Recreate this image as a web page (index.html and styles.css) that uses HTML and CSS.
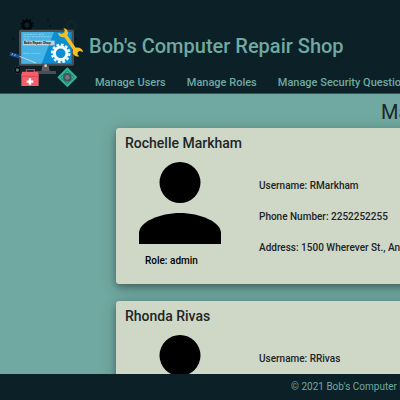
FILE: index.html
```
<!DOCTYPE html>
<html lang="en">
<head>
<meta charset="utf-8">
<meta name="viewport" content="width=device-width, initial-scale=1">
<title>Bob's Computer Repair Shop</title>
<link rel="stylesheet" href="styles.css">
</head>
<body>
<header class="header">
  <svg class="logo" viewBox="24 21 228 216" aria-hidden="true">
    <circle cx="81" cy="45" r="12" fill="none" stroke="#020708" stroke-width="8"/>
    <circle cx="81" cy="45" r="17" fill="none" stroke="#020708" stroke-width="5" stroke-dasharray="5 5.7"/>
    <circle cx="214" cy="47" r="12" fill="none" stroke="#13262b" stroke-width="6"/>
    <circle cx="214" cy="47" r="17" fill="none" stroke="#13262b" stroke-width="4" stroke-dasharray="5 5.7"/>
    <g fill="#051216">
      <circle cx="144" cy="28" r="3"/><circle cx="150" cy="48" r="3"/><circle cx="40" cy="86" r="3"/><circle cx="228" cy="87" r="3"/>
    </g>
    <rect x="57" y="59" width="165" height="108" rx="5" fill="#4b4d50"/>
    <rect x="64" y="66" width="151" height="95" fill="#0b8fd2"/>
    <path d="M64 66h98l-37 95H64z" fill="#46b4e4"/>
    <path d="M127 167h19l3 17h-25z" fill="#5c5e61"/>
    <rect x="106" y="183" width="62" height="9" rx="1" fill="#4b4d50"/>
    <circle cx="137" cy="167" r="4" fill="#d4d8da"/>
    <path d="M71 73h40m5 0h16M70 80h22m4 0h56M71 87h16M70 130h20m4 0h28" stroke="#a5dbf2" stroke-width="2" stroke-dasharray="7 2"/>
    <rect x="69" y="92" width="95" height="14" fill="#c4d0d7"/>
    <text x="71" y="103" class="logo-text">Bob's Repair Shop</text>
    <circle cx="182" cy="130" r="19" fill="none" stroke="#f6fafb" stroke-width="9"/>
    <circle cx="182" cy="130" r="26" fill="none" stroke="#f6fafb" stroke-width="7" stroke-dasharray="8 5.6"/>
    <path d="M190 54c8 1 14 6 14 14 0 3 0 5-2 8l25 37c11-2 21 3 22 13l-10-3-6 4v7l5 5c-10 3-19-3-20-12l1-8-26-37c-10 1-18-5-19-14l11 4 8-4 1-8z" fill="#f5c022"/>
    <path d="M56 138l52 21" stroke="#cfd3d4" stroke-width="3"/>
    <path d="M30 131l28 9" stroke="#164f96" stroke-width="11"/>
    <path d="M38 130l-2 6m10-4l-2 6" stroke="#dbe7f0" stroke-width="2"/>
    <circle cx="52" cy="180" r="5" fill="#626b6f"/>
    <circle cx="52" cy="180" r="8" fill="none" stroke="#02090b" stroke-width="4"/>
    <circle cx="52" cy="180" r="11" fill="none" stroke="#39454a" stroke-width="3" stroke-dasharray="4 4.6"/>
    <path d="M79 189v-10h24v10" fill="none" stroke="#b5414e" stroke-width="4"/>
    <path d="M66 185h48l3 13h-1v30H64v-30h-1z" fill="#f25e6a"/>
    <path d="M64 199h52" stroke="#c14552" stroke-width="2"/>
    <path d="M90 205v19m-10-9h20" stroke="#fff" stroke-width="7"/>
    <path d="M202 172l30 30-30 30-30-30z" fill="#35b394"/>
    <path d="M202 182l20 20-20 20-20-20z" fill="none" stroke="#197b68" stroke-width="3"/>
    <circle cx="202" cy="202" r="13" fill="#46515b"/>
    <circle cx="202" cy="202" r="7" fill="#717982"/>
  </svg>
  <div class="masthead">
    <div class="brand">Bob's Computer Repair Shop</div>
    <nav class="nav">
      <a href="#users">Manage Users</a>
      <a href="#roles">Manage Roles</a>
      <a href="#questions">Manage Security Questions</a>
    </nav>
  </div>
</header>
<main class="main">
  <h1 class="page-title">Manage Users</h1>
  <section class="card">
    <h2 class="name">Rochelle Markham</h2>
    <div class="card-body">
      <div class="profile">
        <svg class="avatar" viewBox="0 0 82 82" aria-hidden="true"><circle cx="41" cy="20.5" r="20.5"/><path d="M0 82V71C0 60 21 51 41 51s41 9 41 20v11z"/></svg>
        <p class="role">Role: admin</p>
      </div>
      <div class="details">
        <p>Username: RMarkham</p>
        <p>Phone Number: 2252252255</p>
        <p>Address: 1500 Wherever St., Anywhere</p>
      </div>
    </div>
  </section>
  <section class="card">
    <h2 class="name">Rhonda Rivas</h2>
    <div class="card-body">
      <div class="profile">
        <svg class="avatar" viewBox="0 0 82 82" aria-hidden="true"><circle cx="41" cy="20.5" r="20.5"/><path d="M0 82V71C0 60 21 51 41 51s41 9 41 20v11z"/></svg>
      </div>
      <div class="details">
        <p>Username: RRivas</p>
      </div>
    </div>
  </section>
</main>
<footer class="footer">© 2021 Bob's Computer Repair Shop</footer>
</body>
</html>
```
FILE: styles.css
```
* { box-sizing: border-box; }
body {
  margin: 0;
  height: 100vh;
  display: flex;
  flex-direction: column;
  overflow: hidden;
  background: #70a9a1;
  color: #212526;
  font-family: Roboto, "Liberation Sans", sans-serif;
  font-weight: 500;
}
h1, h2, p { margin: 0; }
.header {
  flex: none;
  display: flex;
  gap: 5px;
  padding: 17px 0 2px 8px;
  border-bottom: 1px solid #36575a;
  background: #0b2027;
  color: #70a9a1;
  white-space: nowrap;
}
.logo { flex: none; width: 76px; height: 72px; }
.logo-text { font-size: 10px; font-weight: 700; fill: #111d29; }
.brand { padding-top: 17px; font-size: 20px; line-height: 24px; }
.nav {
  display: flex;
  gap: 21px;
  padding: 17px 0 0 6px;
  font-size: 11px;
  line-height: 16px;
}
.nav a { color: inherit; text-decoration: none; }
.main {
  flex: 1;
  min-height: 0;
  min-width: 890px;
  padding: 4px 116px 0;
  overflow: hidden;
}
.page-title {
  font-size: 20px;
  font-weight: 400;
  line-height: 28px;
  text-align: center;
}
.card {
  margin: 2px 0 17px;
  min-height: 156px;
  padding: 6px 9px;
  border-radius: 3px;
  background: #cfd7c7;
  box-shadow: 0 3px 6px rgba(0, 0, 0, .3), 0 4px 18px rgba(0, 0, 0, .2);
}
.card + .card { margin-top: 0; }
.name { font-size: 14px; font-weight: 500; line-height: 18px; }
.card-body { display: flex; gap: 38px; padding: 10px 0 0 14px; }
.avatar { display: block; width: 82px; height: 82px; fill: #000; }
.role { padding: 9px 0 0 6px; font-size: 10px; line-height: 16px; color: #000; }
.details {
  display: flex;
  flex-direction: column;
  gap: 15px;
  padding-top: 16px;
  font-size: 10px;
  line-height: 16px;
  white-space: nowrap;
}
.footer {
  flex: none;
  min-width: 744px;
  padding: 5px 0;
  background: #0b2027;
  color: #70a9a1;
  font-size: 10px;
  font-weight: 400;
  line-height: 16px;
  text-align: center;
}
```
